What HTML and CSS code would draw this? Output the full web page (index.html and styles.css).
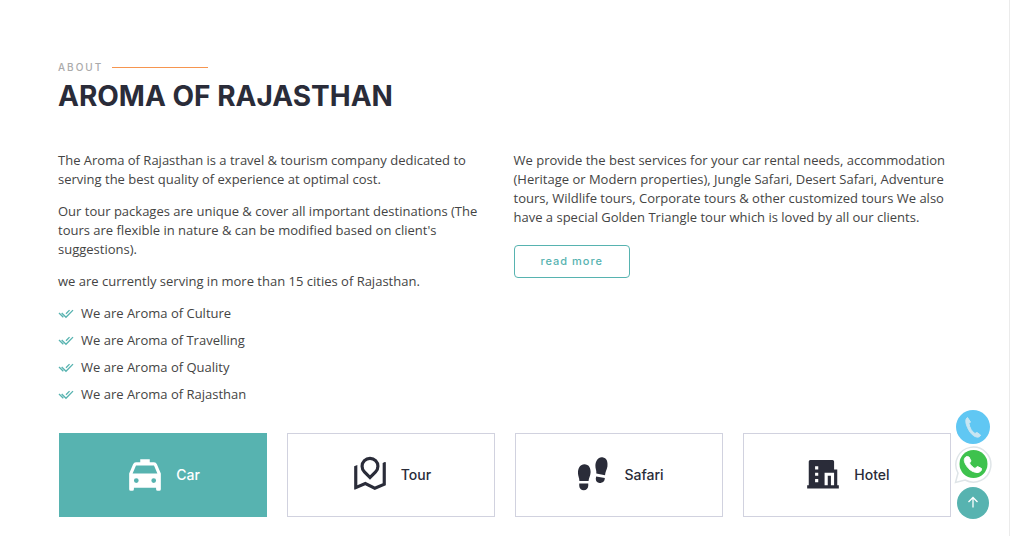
FILE: index.html
```html
<!DOCTYPE html>
<html lang="en">
<head>
<meta charset="utf-8">
<meta name="viewport" content="width=device-width, initial-scale=1">
<title>Aroma of Rajasthan</title>
<link rel="stylesheet" href="styles.css">
</head>
<body>
<svg class="defs" aria-hidden="true">
  <symbol id="check" viewBox="0 0 24 24"><path d="M5.500 10.500L12 17L22.500 6.200M12 11.500L17.300 6.200M1.500 10.500L8 17" fill="none" stroke="currentColor" stroke-width="2"/></symbol>
</svg>
<main class="about">
  <header class="section-title">
    <h2 class="eyebrow">About</h2>
    <p class="headline">Aroma of Rajasthan</p>
  </header>
  <div class="columns">
    <div class="column">
      <p>The Aroma of Rajasthan is a travel &amp; tourism company dedicated to serving the best quality of experience at optimal cost.</p>
      <p>Our tour packages are unique &amp; cover all important destinations (The tours are flexible in nature &amp; can be modified based on client's suggestions).</p>
      <p>we are currently serving in more than 15 cities of Rajasthan.</p>
      <ul class="checks">
        <li><svg><use href="#check"/></svg>We are Aroma of Culture</li>
        <li><svg><use href="#check"/></svg>We are Aroma of Travelling</li>
        <li><svg><use href="#check"/></svg>We are Aroma of Quality</li>
        <li><svg><use href="#check"/></svg>We are Aroma of Rajasthan</li>
      </ul>
    </div>
    <div class="column">
      <p>We provide the best services for your car rental needs, accommodation (Heritage or Modern properties), Jungle Safari, Desert Safari, Adventure tours, Wildlife tours, Corporate tours &amp; other customized tours We also have a special Golden Triangle tour which is loved by all our clients.</p>
      <a class="read-more" href="#more">read more</a>
    </div>
  </div>
  <nav class="tabs" aria-label="Services">
    <a class="tab active" href="#car">
      <svg viewBox="0 0 24 24"><path fill="currentColor" fill-rule="evenodd" d="M22 11v10a1 1 0 0 1-1 1h-1a1 1 0 0 1-1-1v-1H5v1a1 1 0 0 1-1 1H3a1 1 0 0 1-1-1V11l2.480-5.788A2 2 0 0 1 6.320 4H9V2h6v2h2.680a2 2 0 0 1 1.838 1.212L22 11zM4.176 11h15.648l-2.143-5H6.320l-2.144 5zM6.500 17a1.500 1.500 0 1 0 0-3 1.500 1.500 0 0 0 0 3zm11 0a1.500 1.500 0 1 0 0-3 1.500 1.500 0 0 0 0 3z"/></svg><span>Car</span></a>
    <a class="tab" href="#tour">
      <svg viewBox="0 0 24 24"><path fill="currentColor" transform="translate(0 -.5)" d="M4 6.143v12.824l5.065-2.170 6 3L20 17.680V4.857l1.303-.558a.5.5 0 0 1 .697.460V19l-7 3-6-3-6.303 2.701a.5.5 0 0 1-.697-.460V7l2-.857zm12.243 5.100L12 15.485l-4.243-4.242a6 6 0 1 1 8.486 0zM12 12.657l2.828-2.829a4 4 0 1 0-5.656 0L12 12.657z"/></svg><span>Tour</span></a>
    <a class="tab" href="#safari">
      <svg viewBox="0 0 24 24"><path fill="currentColor" d="M3.300 17.300h5.700v1.500a2.850 2.850 0 0 1-5.700 0zM6.600 5.200c2.700 0 3.900 2.300 3.900 4.900 0 2.300-1.200 3.700-1.300 5.700H3.400c0-1.900-.9-3.200-.9-5.200 0-3 1.400-5.400 4.100-5.400zM14 13l5.500.950-.250 1.300a2.850 2.850 0 0 1-5.500-.950zM18 .800c2.700.4 3.500 2.900 3.100 5.800-.3 2-1.400 3.400-1.500 5.500l-5.500-1c.2-1.900-.7-3.200-.6-5.200.2-3 1.800-5.500 4.500-5.100z"/></svg><span>Safari</span></a>
    <a class="tab" href="#hotel">
      <svg viewBox="0 0 24 24"><path fill="currentColor" transform="translate(0 -.5)" d="M17 19h2v-8h-6v8h2v-6h2v6zM3 19V4a1 1 0 0 1 1-1h14a1 1 0 0 1 1 1v5h2v10h1v2H2v-2h1zm4-8v2h2v-2H7zm0 4v2h2v-2H7zm0-8v2h2V7H7z"/></svg><span>Hotel</span></a>
  </nav>
</main>
<aside class="floating">
  <a class="call" href="#call" aria-label="Call"><svg viewBox="0 0 34 34"><path d="M11.500 7.500C9 9 9.500 13 11.500 17.500s5 8.500 9 9.500c2 .5 4-.5 4-2l-3.500-2.500-2 1c-3-1.500-5.500-6-6-10l1.500-1.500z" fill="#c9e6f2" stroke="#c9e6f2" stroke-linejoin="round"/></svg></a>
  <a class="whatsapp" href="#whatsapp" aria-label="WhatsApp"><svg viewBox="0 0 38 38"><path d="M1.500 36.500L4 27A17.500 17.500 0 1 1 11 34z" fill="#fff" stroke="#dfe5e8" stroke-width="1.500"/><circle cx="19.500" cy="18" r="14" fill="#3ec24d"/><path d="M12.500 10.500c-2.500 1.500-3 4-1 7.500 2.500 5 6.500 8 11.500 8.500 3 0 5-2 4.500-4L23.500 20.500 21 22.500c-2-1-4.500-3-5.500-5.500l1.500-2-2-4z" fill="#fff" stroke="#fff" stroke-linejoin="round"/></svg></a>
  <a class="top" href="#" aria-label="Back to top"><svg viewBox="0 0 16 16"><path d="M8 12.500V2.500M3.500 7L8 2.500 12.500 7" fill="none" stroke="#fff" stroke-width="1.300"/></svg></a>
</aside>
</body>
</html>
```

FILE: styles.css
```css
* { box-sizing: border-box; }
body {
  margin: 0;
  border-right: 1px solid #ebebeb;
  min-height: 100vh;
  color: #444;
  background: #fff;
  font: 13px/19px "Open Sans", sans-serif;
}
.defs { display: none; }
a { text-decoration: none; }
.about { padding: 60px 58px 19px; }
.section-title { margin-bottom: 34px; }
.eyebrow {
  display: flex;
  align-items: center;
  gap: 9px;
  margin: 0;
  color: #aaa;
  font: 500 10px/15px Inter, sans-serif;
  letter-spacing: 2px;
  text-transform: uppercase;
}
.eyebrow::after { content: ""; width: 96px; height: 1px; background: #f6954f; }
.headline {
  margin: 0;
  color: #2a2c39;
  font: 700 28px/42px Inter, sans-serif;
  text-transform: uppercase;
}
.columns { display: grid; grid-template-columns: 1fr 1fr; gap: 18px; }
.column p { margin: 0 0 13px; }
.checks { list-style: none; margin: 0; padding: 0; }
.checks li { display: flex; align-items: center; gap: 7px; padding-bottom: 8px; }
.checks svg { width: 16px; height: 16px; color: #57b3b0; }
.read-more {
  display: inline-block;
  margin-top: 5px;
  padding: 7px 26px;
  border: 1px solid #57b3b0;
  border-radius: 4px;
  color: #57b3b0;
  font: 500 11px/17px Inter, sans-serif;
  letter-spacing: 1px;
}
.tabs { display: grid; grid-template-columns: repeat(4, 1fr); gap: 20px; margin: 21px 0 0 1px; }
.tab {
  display: flex;
  align-items: center;
  justify-content: center;
  gap: 12px;
  height: 84px;
  border: 1px solid #d1d2df;
  color: #2a2c39;
  font: 500 14px/20px Inter, sans-serif;
}
.tab svg { width: 38px; height: 38px; }
.tab.active { background: #57b3b0; border-color: #57b3b0; color: #fff; }
.floating {
  position: fixed;
  right: 18px;
  bottom: 17px;
  display: flex;
  flex-direction: column;
  align-items: center;
}
.floating a { display: grid; place-items: center; }
.call { width: 34px; height: 34px; border-radius: 50%; background: #60c7f3; }
.call svg { width: 34px; height: 34px; }
.whatsapp { margin: 2px 0 3px; }
.whatsapp svg { width: 38px; height: 38px; }
.top { width: 32px; height: 32px; border-radius: 50%; background: #57b3b0; }
.top svg { width: 16px; height: 16px; }
```
